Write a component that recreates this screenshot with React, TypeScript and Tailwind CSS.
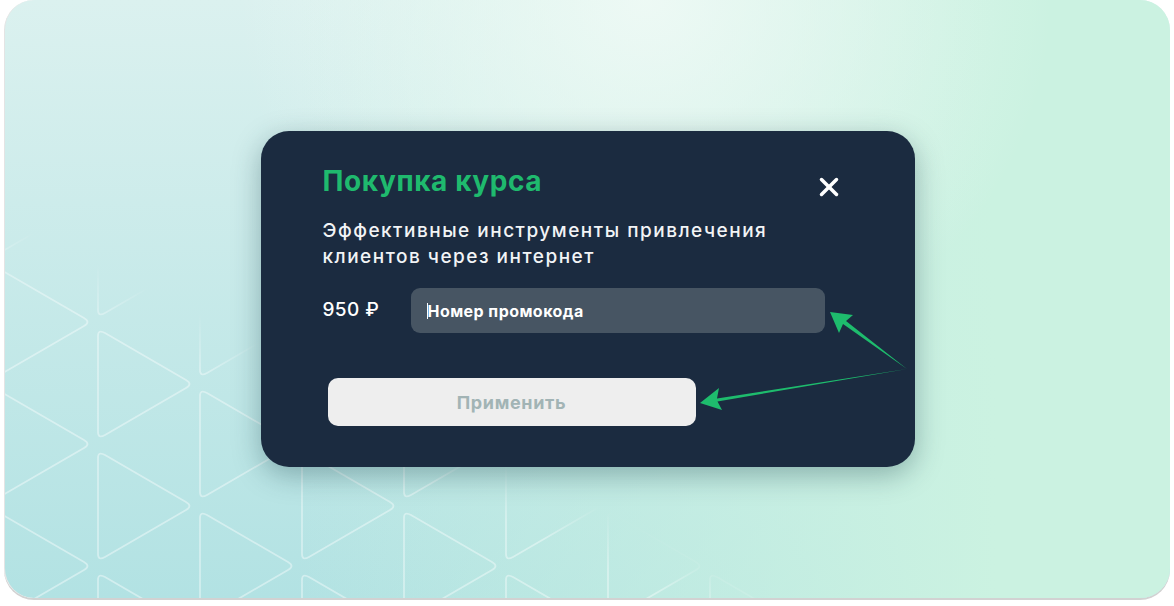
import { X } from "lucide-react"

// rows of rounded "play" triangles in the lower-left corner
const triangles: { x: number; y: number }[] = []
for (let col = 0; col < 8; col++) {
	for (let row = -1; row < 4; row++) {
		triangles.push({ x: -5 + col * 102, y: 322 + row * 122 + (col % 2 ? 62 : 0) })
	}
}

function TrianglePath({ x, y }: { x: number; y: number }) {
	// left edge vertical, apex pointing right; corners softened
	const h = 55
	const w = 95
	const r = 7
	const d = `M ${x} ${y - h + r} Q ${x} ${y - h} ${x + r} ${y - h + r * 0.58} L ${x + w - r} ${y - r * 0.58} Q ${x + w} ${y} ${x + w - r} ${y + r * 0.58} L ${x + r} ${y + h - r * 0.58} Q ${x} ${y + h} ${x} ${y + h - r} Z`
	return <path d={d} />
}

export default function App() {
	return (
		<div className="w-[1174px] h-[606px] bg-white font-['Inter',sans-serif]">
			<div className="relative ml-[4px] w-[1166px] h-[598px] rounded-[30px] overflow-hidden border-l border-[#e4e4e4] shadow-[0_2px_0_#d2d2d2] bg-[radial-gradient(ellipse_at_55%_0%,rgba(240,250,246,0.9),rgba(240,250,246,0)_45%),linear-gradient(90deg,rgba(203,241,226,0)_25%,#cbf2e1_85%),linear-gradient(180deg,#dbf1ef,#b2e2e3)] flex items-center justify-center">
				<svg
					className="absolute inset-0"
					width="1166"
					height="598"
					viewBox="4 0 1166 598"
				>
					<defs>
						<linearGradient
							id="fade"
							gradientUnits="userSpaceOnUse"
							x1="200"
							y1="700"
							x2="352"
							y2="386"
						>
							<stop offset="0" stopColor="#fff" stopOpacity="1" />
							<stop offset="0.84" stopColor="#fff" stopOpacity="0.95" />
							<stop offset="1" stopColor="#fff" stopOpacity="0" />
						</linearGradient>
						<mask id="patternMask">
							<rect x="4" y="0" width="1166" height="598" fill="url(#fade)" />
						</mask>
					</defs>
					<g
						mask="url(#patternMask)"
						fill="none"
						stroke="#ffffff"
						strokeOpacity="0.42"
						strokeWidth="1.8"
					>
						{triangles.map((t, i) => (
							<TrianglePath key={i} x={t.x} y={t.y} />
						))}
					</g>
				</svg>

				<section className="relative w-[654px] h-[336px] rounded-[28px] bg-[#1b2b40] shadow-[0_8px_28px_rgba(20,60,70,0.35)] pl-[62px] pt-[33px]">
					<div className="flex items-start justify-between pr-[71px]">
						<h2 className="text-[28px] leading-[34px] font-bold text-[#1fba6e] tracking-[0.6px]">
							Покупка курса
						</h2>
						<X className="mt-[8px] w-[30px] h-[30px] text-white" strokeWidth={2.8} />
					</div>
					<p className="mt-[16px] text-[19px] leading-[26px] font-medium text-[#f2f4f6] tracking-[1.5px]">
						Эффективные инструменты привлечения
						<br />
						клиентов через интернет
					</p>
					<div className="mt-[18px] flex items-center">
						<span className="w-[88px] text-[19px] font-medium text-white tracking-[0.4px]">950 ₽</span>
						<div className="w-[414px] h-[45px] rounded-[9px] bg-[#475563] flex items-center pl-[16px]">
							<span className="w-px h-[16px] bg-white" />
							<span className="text-[16px] font-bold text-white tracking-[0.45px]">Номер промокода</span>
						</div>
					</div>
					<button className="mt-[45px] ml-[5px] w-[368px] h-[48px] rounded-[10px] bg-[#eeeeee] text-[18px] font-bold text-[#a2b4b5] tracking-[0.65px]">
						Применить
					</button>
				</section>

				<svg
					className="absolute inset-0 pointer-events-none"
					width="1166"
					height="598"
					viewBox="4 0 1166 598"
				>
					<g fill="#1ebc6d">
						<polygon points="829,312 852,315 845,321 906,369 842,324 838,333" />
						<polygon points="699,403 718,388 716,398.5 906,369 716.5,401.5 721,410" />
					</g>
				</svg>
			</div>
		</div>
	)
}
